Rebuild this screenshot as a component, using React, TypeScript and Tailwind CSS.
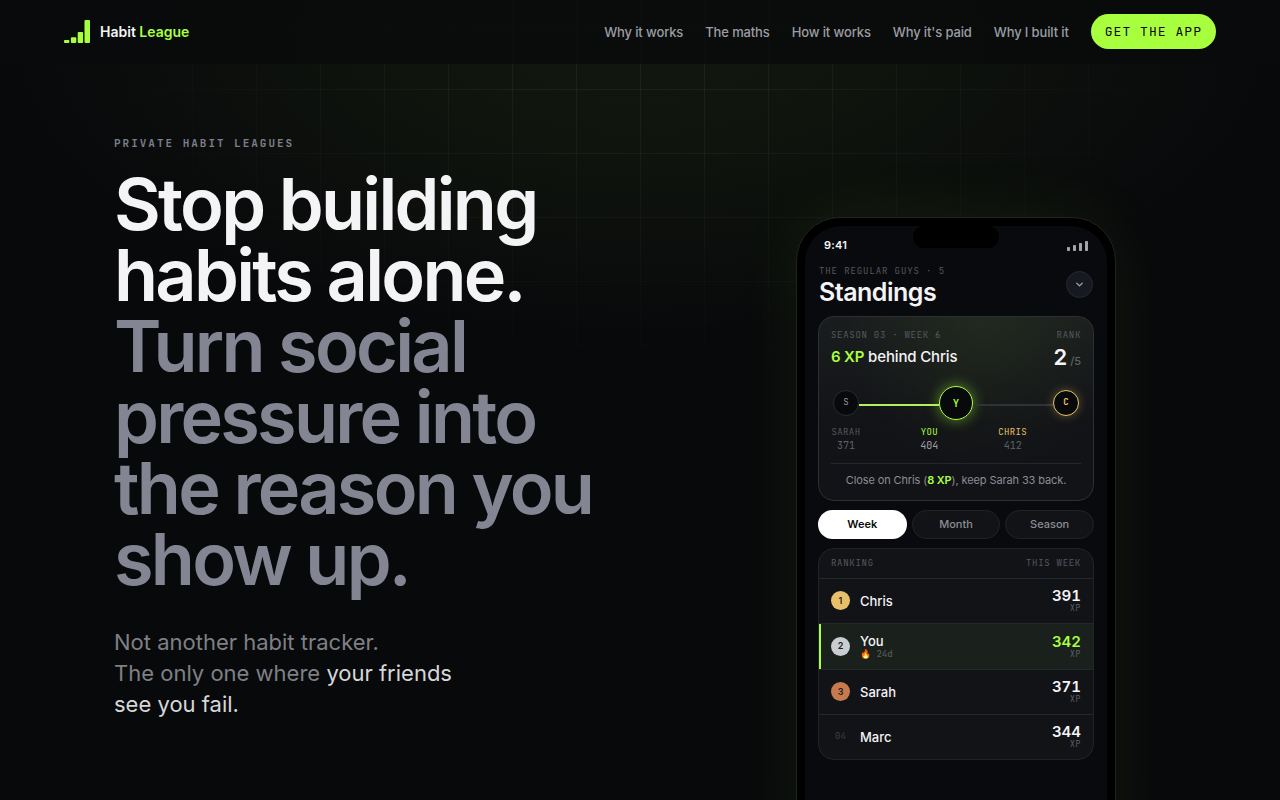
import { ChevronDown } from "lucide-react";
import clsx from "clsx";

const MONO = "font-['JetBrains_Mono','Liberation_Mono',monospace]";

const navLinks = [
  { label: "Why it works", href: "#why" },
  { label: "The maths", href: "#maths" },
  { label: "How it works", href: "#how" },
  { label: "Why it's paid", href: "#paid" },
  { label: "Why I built it", href: "#story" },
];

const labels = [
  { name: "SARAH", xp: 371, nameClass: "text-[#55575e]", xpClass: "text-[#5f6168]" },
  { name: "YOU", xp: 404, nameClass: "text-[#a8ff3e]", xpClass: "text-[#a0a2a8]" },
  { name: "CHRIS", xp: 412, nameClass: "text-[#e8c268]", xpClass: "text-[#5f6168]" },
];

const ranking = [
  { rank: "1", name: "Chris", xp: 391, badge: "bg-[#e8c06a]" },
  { rank: "2", name: "You", xp: 342, badge: "bg-[#c9ccd1]", streak: "24d", me: true },
  { rank: "3", name: "Sarah", xp: 371, badge: "bg-[#c67a4e]" },
  { rank: "04", name: "Marc", xp: 344 },
];

function Logo() {
  return (
    <svg width="26" height="23" viewBox="0 0 26 23" fill="#a8ff3e" aria-hidden="true">
      <rect x="0" y="20" width="5.4" height="3" rx="1" />
      <rect x="6.9" y="17.3" width="5.4" height="5.7" rx="1" />
      <rect x="13.7" y="12" width="5.4" height="11" rx="1" />
      <rect x="20.5" y="0" width="5.5" height="23" rx="1" />
    </svg>
  );
}

function Header() {
  return (
    <header className="relative z-10 flex h-16 items-center justify-between border-b border-transparent bg-[#090b0c]/85 px-16">
      <a href="#top" className="flex items-center gap-2.5 text-sm font-semibold text-[#f4f4f6]">
        <Logo />
        <span>
          Habit <span className="text-[#a8ff3e]">League</span>
        </span>
      </a>
      <nav className="flex items-center gap-[22px]">
        {navLinks.map((link) => (
          <a
            key={link.label}
            href={link.href}
            className="text-[13px] leading-5 font-medium tracking-[-0.01em] text-[#9b9da3]"
          >
            {link.label}
          </a>
        ))}
        <a
          href="#download"
          className={`${MONO} flex h-[35px] items-center rounded-full bg-[#a8ff3e] px-3.5 text-[13px] tracking-[0.08em] text-[#08090b]`}
        >
          GET THE APP
        </a>
      </nav>
    </header>
  );
}

function StatusBar() {
  return (
    <div className="flex h-[39px] items-center justify-between px-[19px]">
      <span className="text-[11px] font-semibold tracking-[0.02em] text-[#f4f4f6]">9:41</span>
      <svg width="21" height="10" viewBox="0 0 21 10" fill="#a3a5a9" aria-hidden="true">
        <rect x="0" y="6" width="3" height="4" rx="0.7" />
        <rect x="6" y="4" width="3" height="6" rx="0.7" />
        <rect x="12" y="2" width="3" height="8" rx="0.7" />
        <rect x="18" y="0" width="3" height="10" rx="0.7" />
      </svg>
    </div>
  );
}

function Node({ letter, className }: { letter: string; className: string }) {
  return (
    <span
      className={clsx(
        MONO,
        "flex shrink-0 items-center justify-center rounded-full border bg-[#08090b]",
        className
      )}
    >
      {letter}
    </span>
  );
}

function SeasonCard() {
  return (
    <section className="mt-2 rounded-2xl border border-[#2c3032] bg-[radial-gradient(ellipse_at_60%_0%,rgba(168,255,62,0.06),transparent_60%),linear-gradient(to_bottom,#1a1d1e,#121317_60%)] p-3">
      <div className={`${MONO} flex justify-between text-[9px] leading-3 tracking-[0.08em] text-[#565a5c]`}>
        <span>SEASON 03 · WEEK 6</span>
        <span>RANK</span>
      </div>
      <div className="mt-0.5 flex h-7 items-center justify-between">
        <p className="text-[15px] font-medium tracking-[-0.01em] text-[#f4f4f6]">
          <span className="font-semibold text-[#a8ff3e]">6 XP</span> behind Chris
        </p>
        <p className="text-[22px] font-semibold text-[#f4f4f6]">
          2<span className="ml-[3px] text-[11px] font-medium text-[#5f6265]">/5</span>
        </p>
      </div>

      <div className="mt-[15px] flex items-center px-0.5">
        <Node letter="S" className="size-[26px] border-[#292c2f] text-[9px] text-[#9b9da3]" />
        <div className="mt-1 h-0.5 flex-1 bg-[#b3f060]" />
        <Node
          letter="Y"
          className="size-[34px] border-[#a8ff3e] text-[10px] font-bold text-[#a8ff3e] shadow-[0_0_14px_rgba(168,255,62,0.5)]"
        />
        <div className="mt-1 h-0.5 flex-1 bg-[#303336]" />
        <Node
          letter="C"
          className="size-[26px] border-[#e8c268] text-[9px] font-bold text-[#e8c268] shadow-[0_0_10px_rgba(232,194,104,0.35)]"
        />
      </div>

      <div className={`${MONO} mt-1.5 grid grid-cols-3 text-center`}>
        {labels.map((l) => (
          <div key={l.name} className="w-[30px]">
            <p className={`text-[9px] leading-[13px] tracking-[0.04em] ${l.nameClass}`}>{l.name}</p>
            <p className={`text-[10px] leading-[13px] ${l.xpClass}`}>{l.xp}</p>
          </div>
        ))}
      </div>

      <p className="mt-[11px] border-t border-[#25282b] pt-2 text-center text-[11px] leading-4 tracking-[-0.01em] text-[#8b8d93]">
        Close on Chris (<span className="font-semibold text-[#a8ff3e]">8 XP</span>), keep Sarah 33 back.
      </p>
    </section>
  );
}

function Tabs() {
  return (
    <div className="mt-[9px] grid grid-cols-3 gap-[5px] text-[11px] font-medium">
      <button className="h-[29px] rounded-full bg-white font-semibold text-[#08090b]">Week</button>
      <button className="h-[29px] rounded-full border border-[#212327] bg-[#121317] text-[#8b8d93]">Month</button>
      <button className="h-[29px] rounded-full border border-[#212327] bg-[#121317] text-[#8b8d93]">Season</button>
    </div>
  );
}

function Ranking() {
  return (
    <div className="mt-[9px] overflow-hidden rounded-2xl border border-[#212427] bg-[#121317]">
      <table className="w-full">
        <thead className={`${MONO} text-[9px] tracking-[0.08em] text-[#565860]`}>
          <tr className="h-[29px]">
            <th colSpan={2} className="pl-3 text-left font-normal">RANKING</th>
            <th className="pr-3 text-right font-normal">THIS WEEK</th>
          </tr>
        </thead>
        <tbody>
          {ranking.map((row) => (
            <tr
              key={row.name}
              className={clsx(
                "border-t border-[#25282b]",
                row.me ? "h-[46px] bg-[#1a201b]" : "h-[45px]"
              )}
            >
              <td className={clsx("w-[41px] pl-3", row.me && "shadow-[inset_2px_0_0_#a8ff3e]")}>
                {row.badge ? (
                  <span
                    className={`flex size-[19px] items-center justify-center rounded-full text-[9px] font-semibold text-[#1a1b1e] ${row.badge}`}
                  >
                    {row.rank}
                  </span>
                ) : (
                  <span className={`${MONO} flex w-[19px] justify-center text-[9px] text-[#3c3e44]`}>{row.rank}</span>
                )}
              </td>
              <td className="text-[13px] leading-4 font-medium text-[#f4f4f6]">
                {row.name}
                {row.streak && (
                  <span className={`${MONO} block text-[9px] leading-[11px] font-normal text-[#5f6265]`}>
                    🔥 {row.streak}
                  </span>
                )}
              </td>
              <td className="pr-3 text-right">
                <span
                  className={clsx(
                    "block text-[15px] leading-4 font-semibold tabular-nums",
                    row.me ? "text-[#a8ff3e]" : "text-[#f4f4f6]"
                  )}
                >
                  {row.xp}
                </span>
                <span className={`${MONO} block text-[8px] leading-[9px] tracking-[0.08em] text-[#5f6168]`}>XP</span>
              </td>
            </tr>
          ))}
        </tbody>
      </table>
    </div>
  );
}

function Phone() {
  return (
    <div className="w-80 rounded-[44px] border border-[#21241e] bg-black p-2 shadow-[0_0_70px_rgba(168,255,62,0.07)]">
      <div className="relative min-h-[640px] rounded-[36px] bg-[#090a0d]">
        <div className="absolute top-0 left-1/2 h-[22px] w-[86px] -translate-x-1/2 rounded-[11px] bg-black" />
        <StatusBar />
        <div className="px-[13px]">
          <div className="flex items-start justify-between px-px">
            <div>
              <p className={`${MONO} text-[9px] leading-3 tracking-[0.1em] text-[#55575e]`}>
                THE REGULAR GUYS · 5
              </p>
              <h2 className="text-[25px] leading-[31px] font-semibold tracking-[-0.02em] text-[#f4f4f6]">
                Standings
              </h2>
            </div>
            <button
              aria-label="Switch league"
              className="mt-1.5 flex size-[27px] items-center justify-center rounded-full border border-[#262a30] bg-[#161920] text-[#a3a5a9]"
            >
              <ChevronDown size={11} strokeWidth={3} />
            </button>
          </div>
          <SeasonCard />
          <Tabs />
          <Ranking />
        </div>
      </div>
    </div>
  );
}

export default function App() {
  return (
    <div
      id="top"
      className="relative h-screen overflow-hidden bg-[#08090b] font-['Inter','Liberation_Sans',sans-serif] text-[#f4f4f6]"
    >
      {/* background glow + grid */}
      <div className="absolute inset-x-0 top-0 h-[420px] bg-[radial-gradient(ellipse_50%_70%_at_50%_10%,rgba(168,255,62,0.06),rgba(168,255,62,0.045)_40%,transparent)]" />
      <div className="absolute inset-x-0 top-0 h-[480px] bg-[linear-gradient(to_right,rgba(255,255,255,0.05)_1px,transparent_1px),linear-gradient(to_bottom,rgba(255,255,255,0.05)_1px,transparent_1px)] bg-size-[64px_64px] bg-position-[0_25px] mask-[radial-gradient(ellipse_46%_80%_at_50%_5%,black_20%,transparent)]" />

      <Header />

      <main className="relative flex justify-between px-[114px]">
        <div className="flex-1 pt-[71px]">
          <p className={`${MONO} text-[11px] leading-4 font-bold tracking-[0.18em] text-[#7c7e8a]`}>
            PRIVATE HABIT LEAGUES
          </p>
          <h1 className="mt-[17px] text-[72px] leading-[71px] font-semibold tracking-[-0.038em]">
            Stop building
            <br />
            habits alone.
            <br />
            <span className="text-[#838592]">
              Turn social
              <br />
              pressure into
              <br />
              the reason you
              <br />
              show up.
            </span>
          </h1>
          <p className="mt-[33px] text-[22px] leading-[31px] text-[#7e8085]">
            Not another habit tracker.
            <br />
            The only one where{" "}
            <span className="text-[#d6d7d9]">
              your friends
              <br />
              see you fail.
            </span>
          </p>
        </div>
        <div className="flex w-[420px] shrink-0 justify-center pt-[153px]">
          <Phone />
        </div>
      </main>
    </div>
  );
}
